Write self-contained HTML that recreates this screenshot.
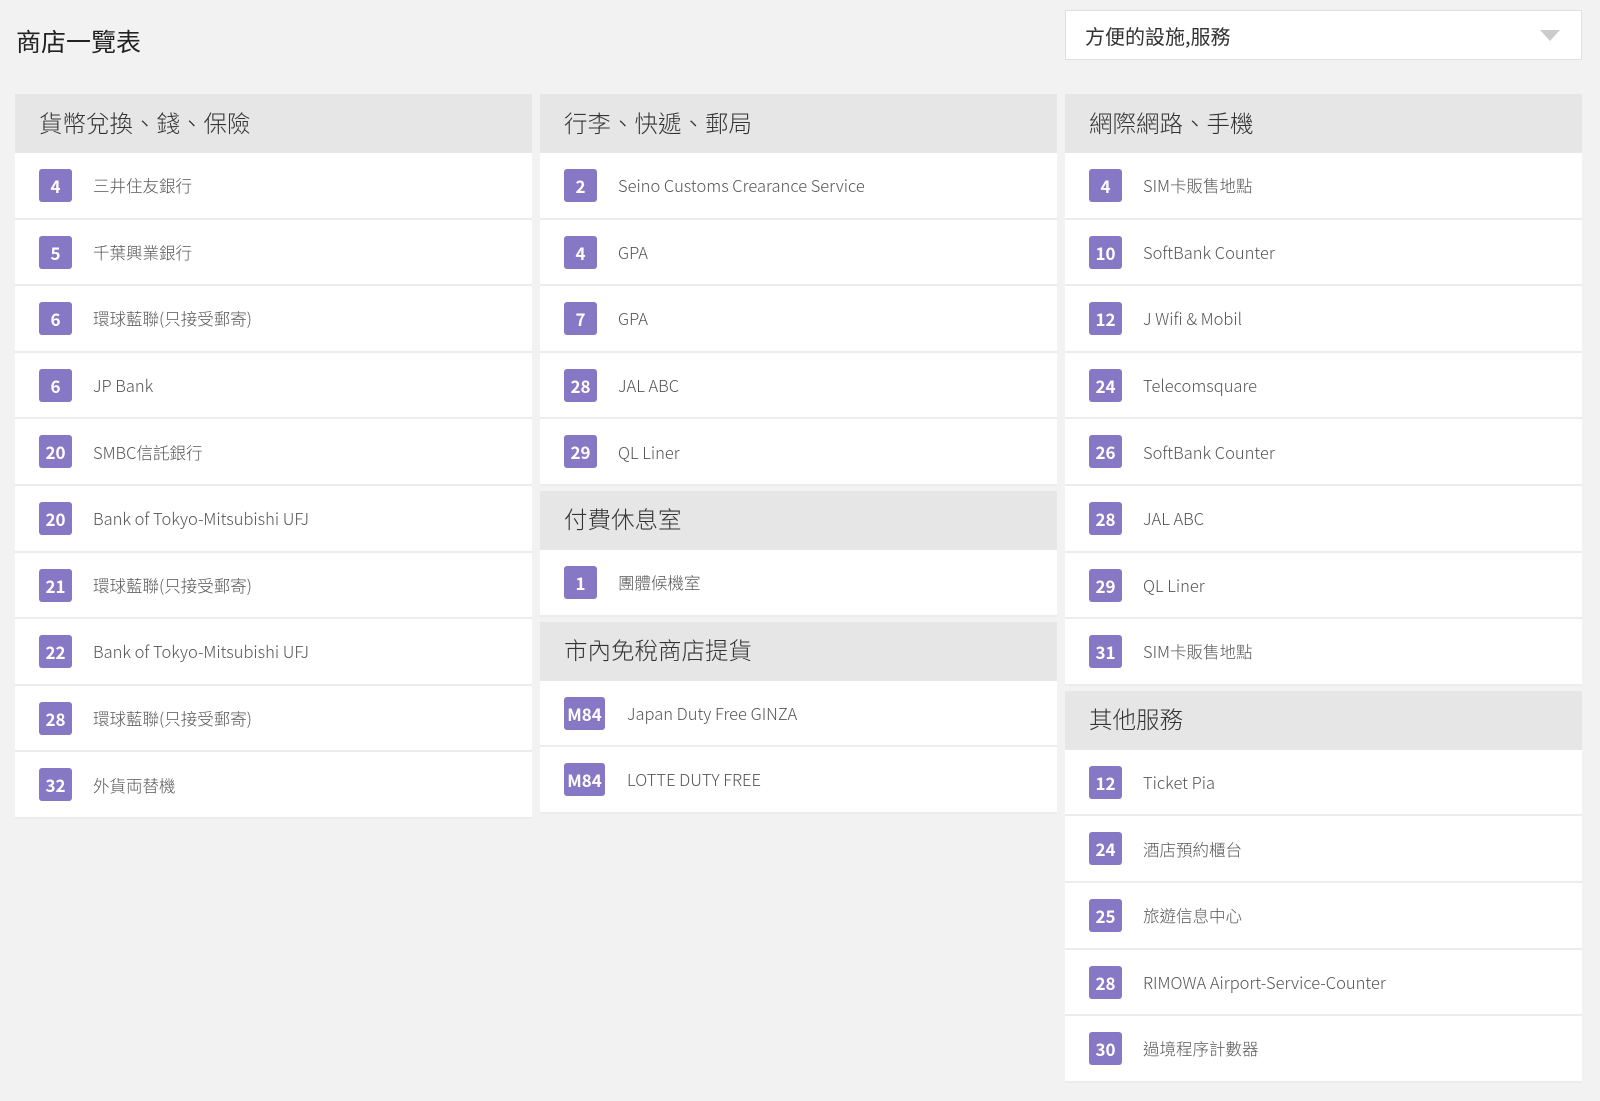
<!DOCTYPE html>
<html><head><meta charset="utf-8"><style>
*{box-sizing:border-box;margin:0;padding:0}
body{width:1600px;height:1101px;background:#f2f2f2;font-family:"Noto Sans CJK TC","Liberation Sans",sans-serif;position:relative;overflow:hidden}
h1{position:absolute;left:16px;top:24px;font-size:25px;font-weight:normal;color:#222;line-height:34px}
.sel{position:absolute;left:1065px;top:10px;width:517px;height:50px;background:#fff;border:1px solid #e0e0e0;font-size:20px;color:#333;padding:0 0 0 19px;display:flex;align-items:center}
.sel:after{content:"";position:absolute;right:21px;top:19px;border-left:10px solid transparent;border-right:10px solid transparent;border-top:11px solid #ccc}
.col{position:absolute;top:94px;width:517px}
.h{height:59px;background:#e6e6e6;font-size:23.5px;color:#333;padding:0 0 4px 24px;display:flex;align-items:center;font-weight:300}
.r{height:66.6px;background:#fff;border-bottom:2px solid #ececec;position:relative;font-size:16.5px;color:#555;padding:0 0 0 78px;display:flex;align-items:center;font-weight:300}
.b{position:absolute;left:24px;top:16px;width:33px;height:33px;background:#8678c4;border-radius:3px;color:#fff;font-weight:bold;font-size:17px;display:flex;align-items:center;justify-content:center}
.w .r{padding-left:87px}.w .b{width:41px}
.g{height:5px}
</style></head><body>
<h1>商店一覽表</h1>
<div class="sel">方便的設施,服務</div>
<div class="col" style="left:15px">
<div class="h">貨幣兌換、錢、保險</div>
<div class="r"><span class="b">4</span>三井住友銀行</div>
<div class="r"><span class="b">5</span>千葉興業銀行</div>
<div class="r"><span class="b">6</span>環球藍聯(只接受郵寄)</div>
<div class="r"><span class="b">6</span>JP Bank</div>
<div class="r"><span class="b">20</span>SMBC信託銀行</div>
<div class="r"><span class="b">20</span>Bank of Tokyo-Mitsubishi UFJ</div>
<div class="r"><span class="b">21</span>環球藍聯(只接受郵寄)</div>
<div class="r"><span class="b">22</span>Bank of Tokyo-Mitsubishi UFJ</div>
<div class="r"><span class="b">28</span>環球藍聯(只接受郵寄)</div>
<div class="r"><span class="b">32</span>外貨両替機</div>
</div>
<div class="col" style="left:540px">
<div class="h">行李、快遞、郵局</div>
<div class="r"><span class="b">2</span>Seino Customs Crearance Service</div>
<div class="r"><span class="b">4</span>GPA</div>
<div class="r"><span class="b">7</span>GPA</div>
<div class="r"><span class="b">28</span>JAL ABC</div>
<div class="r"><span class="b">29</span>QL Liner</div>
<div class="g"></div>
<div class="h">付費休息室</div>
<div class="r"><span class="b">1</span>團體候機室</div>
<div class="g"></div>
<div class="h">市內免稅商店提貨</div>
<div class="w">
<div class="r"><span class="b">M84</span>Japan Duty Free GINZA</div>
<div class="r"><span class="b">M84</span>LOTTE DUTY FREE</div>
</div>
</div>
<div class="col" style="left:1065px">
<div class="h">網際網路、手機</div>
<div class="r"><span class="b">4</span>SIM卡販售地點</div>
<div class="r"><span class="b">10</span>SoftBank Counter</div>
<div class="r"><span class="b">12</span>J Wifi &amp; Mobil</div>
<div class="r"><span class="b">24</span>Telecomsquare</div>
<div class="r"><span class="b">26</span>SoftBank Counter</div>
<div class="r"><span class="b">28</span>JAL ABC</div>
<div class="r"><span class="b">29</span>QL Liner</div>
<div class="r"><span class="b">31</span>SIM卡販售地點</div>
<div class="g"></div>
<div class="h">其他服務</div>
<div class="r"><span class="b">12</span>Ticket Pia</div>
<div class="r"><span class="b">24</span>酒店預約櫃台</div>
<div class="r"><span class="b">25</span>旅遊信息中心</div>
<div class="r"><span class="b">28</span>RIMOWA Airport-Service-Counter</div>
<div class="r"><span class="b">30</span>過境程序計數器</div>
</div>
</body></html>
